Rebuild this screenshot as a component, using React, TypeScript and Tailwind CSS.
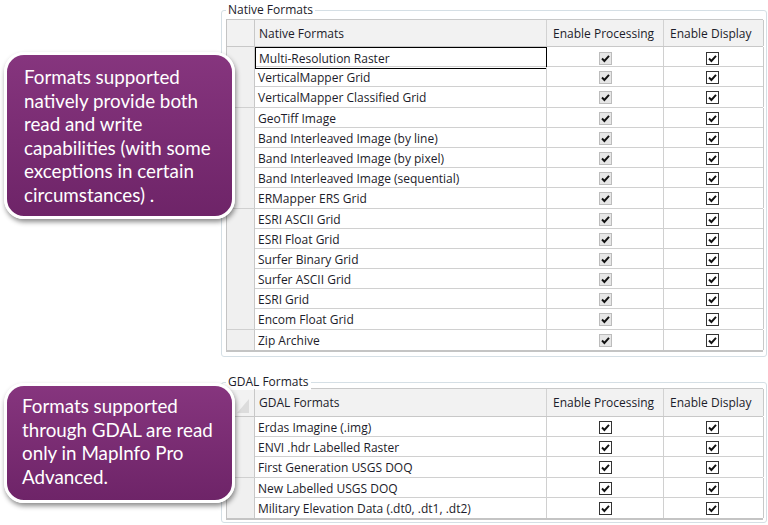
const nativeRows = [
  'Multi-Resolution Raster',
  'VerticalMapper Grid',
  'VerticalMapper Classified Grid',
  'GeoTiff Image',
  'Band Interleaved Image (by line)',
  'Band Interleaved Image (by pixel)',
  'Band Interleaved Image (sequential)',
  'ERMapper ERS Grid',
  'ESRI ASCII Grid',
  'ESRI Float Grid',
  'Surfer Binary Grid',
  'Surfer ASCII Grid',
  'ESRI Grid',
  'Encom Float Grid',
  'Zip Archive',
];

const gdalRows = [
  'Erdas Imagine (.img)',
  'ENVI .hdr Labelled Raster',
  'First Generation USGS DOQ',
  'New Labelled USGS DOQ',
  'Military Elevation Data (.dt0, .dt1, .dt2)',
];

const uiFont = { fontFamily: '"Open Sans", "Noto Sans", sans-serif' };

function Check({ disabled }: { disabled?: boolean }) {
  return (
    <span
      className={
        'flex h-[13px] w-[13px] items-center justify-center border ' +
        (disabled ? 'border-[#bcbcbc] bg-[#e6e6e6]' : 'border-[#333] bg-white')
      }
    >
      <svg width="9" height="9" viewBox="0 0 9 9">
        <path d="M1 4.5 L3.4 7 L8 1.8" fill="none" stroke="#111" strokeWidth="1.9" />
      </svg>
    </span>
  );
}

function FormatGrid({
  title,
  rows,
  grayProcessing,
  corner,
}: {
  title: string;
  rows: string[];
  grayProcessing?: boolean;
  corner?: boolean;
}) {
  return (
    <div className="w-[537px] border-l border-b-2 border-[#c4c4c4] text-[12px] text-[#1c1c2a]" style={uiFont}>
      <div
        className={
          'grid grid-cols-[28px_292px_117px_100px] border-t border-b border-[#c8c8c8] bg-[#f2f2f2] ' +
          (corner ? 'h-[29px]' : 'h-[28px]')
        }
      >
        <div className="relative border-r border-[#c8c8c8]">
          {corner && (
            <svg className="absolute bottom-[3px] right-[5px]" width="12" height="14" viewBox="0 0 12 14">
              <path d="M12 0 L12 14 L0 14 Z" fill="#dcdcdc" />
            </svg>
          )}
        </div>
        <div className="flex items-center border-r border-[#d2d2d2] pt-[1px] pl-[4px]">{title}</div>
        <div className="flex items-center border-r border-[#d2d2d2] pt-[1px] pl-[6px]">Enable Processing</div>
        <div className="flex items-center border-r border-[#c8c8c8] pt-[1px] pl-[6px]">Enable Display</div>
      </div>
      {rows.map((name, i) => (
        <div
          key={name}
          className="grid h-[20.2px] grid-cols-[28px_292px_117px_100px] border-b border-[#d0d0d0] last:border-b-0"
        >
          <div className="border-r border-[#c8c8c8] bg-[#f0f0f0]" />
          <div
            className={
              'flex items-center border-r pt-[2px] pl-[3px] ' +
              (i === 0 && grayProcessing ? 'border border-black' : 'border-[#d0d0d0]')
            }
          >
            {name}
          </div>
          <div className="flex items-center justify-center border-r border-[#d0d0d0] pt-[1px]">
            <Check disabled={grayProcessing} />
          </div>
          <div className="flex items-center justify-center border-r border-[#c8c8c8] pt-[1px] pr-[2px]">
            <Check />
          </div>
        </div>
      ))}
    </div>
  );
}

function GroupBox({ label, children, className }: { label: string; children: React.ReactNode; className: string }) {
  return (
    <div className={'relative ml-[221px] w-[546px] rounded-[3px] border border-[#d5dfe5] ' + className}>
      <span
        className="absolute -top-[9px] left-[4px] bg-white px-[2px] text-[12px] leading-[16px] text-[#1c1c2a]"
        style={uiFont}
      >
        {label}
      </span>
      {children}
    </div>
  );
}

function Callout({ className, children }: { className: string; children: React.ReactNode }) {
  return (
    <div
      className={
        'absolute left-[4px] w-[231px] rounded-[20px] border-[3px] border-white bg-gradient-to-b from-[#86357e] to-[#6e2468] text-[18.8px] leading-[23.6px] text-white shadow-[1px_3px_5px_rgba(0,0,0,0.45)] ' +
        className
      }
      style={{ fontFamily: 'Lato, "Noto Sans", sans-serif' }}
    >
      {children}
    </div>
  );
}

export default function App() {
  return (
    <div className="relative h-[525px] w-[768px] overflow-hidden bg-white">
      <GroupBox label="Native Formats" className="mt-[10px] h-[347px] pt-[8px] pl-[4px]">
        <FormatGrid title="Native Formats" rows={nativeRows} grayProcessing />
      </GroupBox>
      <GroupBox label="GDAL Formats" className="mt-[25px] h-[141px] pt-[5px] pl-[4px]">
        <FormatGrid title="GDAL Formats" rows={gdalRows} corner />
      </GroupBox>

      <Callout className="top-[52px] h-[167px] pt-[10px] pl-[17px] pr-[10px]">
        Formats supported natively provide both read and write capabilities (with some exceptions in certain
        circumstances) .
      </Callout>
      <Callout className="top-[383px] h-[120px] pt-[8px] pl-[15px] pr-[6px]">
        Formats supported through GDAL are read only in MapInfo Pro Advanced.
      </Callout>
    </div>
  );
}
